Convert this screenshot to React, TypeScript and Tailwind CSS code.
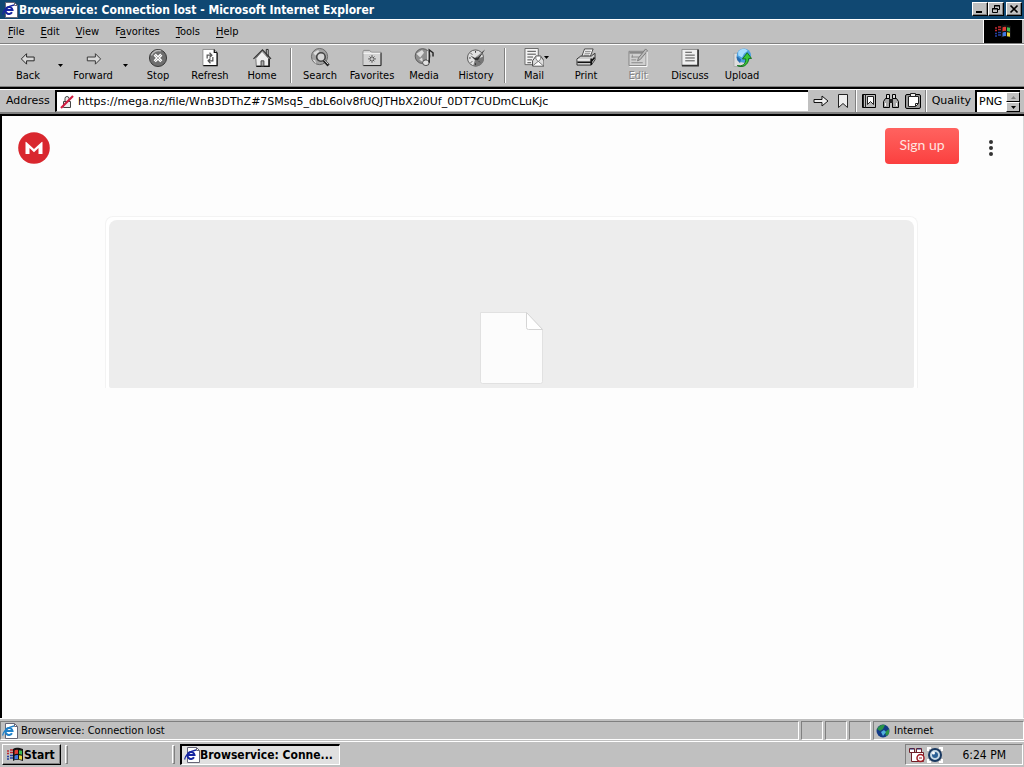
import React from "react";

const raised =
  "border border-t-white border-l-white border-r-black border-b-black bg-[#c0c0c0]";
const ui = "font-['DejaVu_Sans_Condensed','DejaVu_Sans',sans-serif]";

const icons: Record<string, React.ReactNode> = {
  Back: (
    <path d="M3 11.500 8.500 6v3.500h8v4h-8V17Z" fill="#d8d8d8" stroke="#222" />
  ),
  Forward: (
    <path d="M18 11.500 12.500 6v3.500H4v4h8.500V17Z" fill="#d8d8d8" stroke="#333" />
  ),
  Stop: (
    <>
      <circle cx="10" cy="10.500" r="9" fill="#6e6e6e" stroke="#333" />
      <path d="M3 8a8 8 0 0 1 10-5" stroke="#bbb" fill="none" strokeWidth="1.500" />
      <path d="m6.500 7 7 7m0-7-7 7" stroke="#fff" strokeWidth="3.200" />
      <path d="m7 7.500 6 6m0-6-6 6" stroke="#aaa" strokeWidth="1" />
    </>
  ),
  Refresh: (
    <>
      <path d="M2.500 1.500h12l3 3v14h-15Z" fill="#fff" stroke="#888" />
      <path d="M17.500 5v13.500H3M14.500 1.500v3h3" fill="none" stroke="#111" strokeWidth="1.300" />
      <path d="M7 11V7.500h5M9.500 5l2.500 2.500L9.500 10M13 9.500v4H8M10.500 11 8 13.500l2.500 2.500" fill="none" stroke="#555" strokeWidth="1.300" />
    </>
  ),
  Home: (
    <>
      <path d="M14.500 1.500h2v8h-2Z" fill="#ddd" stroke="#222" />
      <path d="M3.500 11 10 3.500l7 7.500v8h-13Z" fill="#eee" stroke="#777" />
      <path d="m1 11.500 9.500-9.500 9 9.500" fill="none" stroke="#333" strokeWidth="1.300" />
      <path d="M17.500 11v8.500H4" fill="none" stroke="#111" strokeWidth="1.500" />
      <path d="M9 13.500h3V19H9Z" fill="#aaa" stroke="#444" />
    </>
  ),
  Search: (
    <>
      <circle cx="9.500" cy="9" r="8.500" fill="#a3a3a3" stroke="#666" />
      <path d="M3 5 8 2l2 3-5 3ZM2 12l3 1 1 4" fill="#ddd" />
      <circle cx="11" cy="9.500" r="4.500" fill="#d6d6d6" stroke="#444" strokeWidth="1.700" />
      <path d="m14 13 5 5.500" stroke="#222" strokeWidth="3" />
      <path d="m14.500 12.500 4 4.500" stroke="#ddd" />
    </>
  ),
  Favorites: (
    <>
      <path d="M.5 18.500v-15l1-1h6l2 2h10v14Z" fill="#d4d4d4" stroke="#888" />
      <path d="M1 5.500h18" stroke="#fff" />
      <path d="M19.500 5v13.500H1" fill="none" stroke="#222" />
      <path d="M10 7.500v8M6 11.500h8M7.500 9l5 5m0-5-5 5" stroke="#444" />
      <circle cx="10" cy="11.500" r="1" fill="#fff" />
    </>
  ),
  Media: (
    <>
      <circle cx="8.500" cy="8.500" r="7.800" fill="#8f8f8f" stroke="#555" />
      <path d="m2 6 6-4 2 3-4 5ZM5 12l3-2 1 5Z" fill="#ddd" />
      <ellipse cx="12" cy="15.500" rx="3.500" ry="3" fill="#e2e2e2" stroke="#444" />
      <path d="M15.500 15.500V2l4 3v4" fill="none" stroke="#222" strokeWidth="1.500" />
      <path d="M14 3v10" stroke="#fff" />
    </>
  ),
  History: (
    <>
      <circle cx="9.500" cy="10.500" r="8.500" fill="#e2e2e2" stroke="#555" />
      <path d="M9 12 18 9a8.500 8.500 0 0 1-11 10Z" fill="#777" />
      <path d="M9.500 3v2M2.500 10.500h2M4.500 5.500 6 7M9.500 16v2M4.500 15.500 6 14M14 15l-1-1" stroke="#333" />
      <path d="m4 8 5 2.500 10.500-9L12 13l-3-.5Z" fill="#333" />
      <path d="m11 10 5-5" stroke="#ddd" />
    </>
  ),
  Mail: (
    <>
      <path d="M.5.5h14v17H.500Z" fill="#f4f4f4" stroke="#666" />
      <path d="M3 3.500h9M3 6.500h9M3 9.500h6M3 12.500h5M3 15.500h4" stroke="#444" />
      <path d="m8.500 13.500 3.500-5h5l3.500 5v5.500h-12Z" fill="#ddd" stroke="#444" />
      <path d="m9 18.500 5.500-4.500 5 4.500M12 8.500h5v3l-2.500 3-2.500-3Z" fill="#fff" stroke="#777" />
    </>
  ),
  Print: (
    <>
      <path d="m5.500 9 3-8h9l-3 8Z" fill="#fff" stroke="#444" />
      <path d="M9 3.500h6M8.500 5.500h6M7.500 7.500h6" stroke="#777" />
      <path d="m.5 11.500 4-3h11l4-3v7l-4 5.500H.500Z" fill="#ccc" stroke="#333" />
      <path d="M1 15h14l4-5M15.500 11v7" fill="none" stroke="#111" strokeWidth="1.800" />
      <path d="M1 12.500h13" stroke="#fff" />
    </>
  ),
  Edit: (
    <>
      <path d="M.5 3.500h18v15H.500Z" fill="#d0d0d0" stroke="#858585" />
      <path d="M1 5h17" stroke="#888" strokeWidth="2" />
      <path d="M3 9.500h8M3 12.500h5M3 15.500h12M4 7v3" stroke="#888" />
      <path d="m9.500 13.500 1-3L18 1l2 2-7.500 9Z" fill="#bbb" stroke="#777" />
      <path d="M1 19.500h18.500V4" fill="none" stroke="#fff" />
    </>
  ),
  Discuss: (
    <>
      <path d="M1.500 1.500h17v17h-17Z" fill="#f0f0f0" stroke="#888" />
      <path d="M18.500 1.500v17h-17" fill="none" stroke="#333" strokeWidth="1.800" />
      <path d="M5 4.500h7M5 7.500h10M5 10.500h10M5 13.500h10" stroke="#444" />
    </>
  ),
  Upload: (
    <>
      <path d="M1.500 5.500h11v14h-11Z" fill="#ddd" stroke="#aaa" />
      <circle cx="12" cy="8" r="7.500" fill="#4a9fe0" />
      <path d="M6 4c3-4 8-4 10-1l-4 3-2 4-4-2Z" fill="#a5dcff" />
      <path d="M5 18.500c5 1 9-1 9-7h-3.500L15.500 5l4.500 6h-3c0 7-7 10.500-12 7.500Z" fill="#38c738" stroke="#13701d" />
      <path d="M4 9c2 0 3 2 5 3l-1 4-3-3Z" fill="#246bb0" />
    </>
  ),
};

function ToolIcon({ name }: { name: string }) {
  return (
    <svg viewBox="0 0 20 20" className="size-5" aria-hidden="true">
      {icons[name]}
    </svg>
  );
}

function Caret() {
  return (
    <svg viewBox="0 0 5 3" className="h-[3px] w-[5px]" aria-hidden="true">
      <path d="M0 0h5L2.500 3Z" fill="#000" />
    </svg>
  );
}

function Tool({ name, disabled, menu }: { name: string; disabled?: boolean; menu?: boolean }) {
  return (
    <button
      type="button"
      disabled={disabled}
      className="relative flex w-[52px] shrink-0 flex-col items-center gap-[2px] disabled:text-[#858585] disabled:[text-shadow:1px_1px_#fff]"
    >
      <ToolIcon name={name} />
      <span className="leading-[14px]">{name}</span>
      {menu && (
        <span className="absolute top-2 right-[11px]">
          <Caret />
        </span>
      )}
    </button>
  );
}

function MenuCaret({ label }: { label: string }) {
  return (
    <button type="button" aria-label={label} className="flex w-[13px] shrink-0 items-center justify-center">
      <Caret />
    </button>
  );
}

function Divider() {
  return <span className="mx-[2px] h-full w-[2px] shrink-0 border-l border-l-[#808080] bg-white" />;
}

function IePage({ tone, className }: { tone: string; className: string }) {
  return (
    <svg viewBox="0 0 16 16" className={className} aria-hidden="true">
      <path d="M3.500.5h9l3 3v12h-12Z" fill="#fff" stroke="#667" />
      <path d="M12.500.5v3h3" fill="none" stroke="#667" />
      <path d="M10 10.300A3.500 3.500 0 1 1 10.500 8H4" fill="none" stroke={tone} strokeWidth="2" />
      <path d="M1 12.500C0 10 5 4 12 3" fill="none" stroke={tone} strokeWidth="1.300" />
    </svg>
  );
}

function FlagMark({ className }: { className: string }) {
  return (
    <svg viewBox="0 0 18 16" className={className} aria-hidden="true">
      <path d="M7 2c3-2 6-1 10 0v12c-4-1-7-2-10 0Z" fill="#111" />
      <path d="M8.500 3.500c1-.7 2-.8 3.500-.6v4c-1.500-.2-2.500 0-3.500.6Z" fill="#e33c33" />
      <path d="M13 3.200l3 .5v4l-3-.6Z" fill="#3dbb50" />
      <path d="M8.500 8.700c1-.7 2-.8 3.500-.6v4c-1.500-.2-2.500 0-3.500.6Z" fill="#4078e0" />
      <path d="M13 8.300l3 .5v4l-3-.6Z" fill="#e8d33c" />
      <path d="M1 4h2m1-1h3M1 6.500h2m1-1h3" stroke="#c02a30" strokeWidth="1.500" />
      <path d="M1 9.500h2m1-1h3M1 12h2m1-1h3" stroke="#2440a0" strokeWidth="1.500" />
    </svg>
  );
}

function TitleBar() {
  const box = `${raised} flex h-[14px] w-4 items-center justify-center shadow-[inset_-1px_-1px_#808080]`;
  return (
    <header className="flex h-[19px] items-center bg-[#104872] px-[2px] text-white">
      <IePage tone="#1525a0" className="size-4 shrink-0" />
      <h1 className="ml-px flex-1 truncate text-[12px] leading-4 font-bold">
        Browservice: Connection lost - Microsoft Internet Explorer
      </h1>
      <div className="mb-[2px] flex">
        <button type="button" aria-label="Minimize" className={box}>
          <svg viewBox="0 0 10 10" className="size-[10px]"><path d="M1 8h6" stroke="#000" strokeWidth="2" /></svg>
        </button>
        <button type="button" aria-label="Restore" className={box}>
          <svg viewBox="0 0 10 10" className="size-[10px]">
            <path d="M3.500 4V1.500h5v4H7M3 2h6" fill="none" stroke="#000" />
            <path d="M1.500 4.500h5v4h-5ZM1 5h6" fill="none" stroke="#000" />
          </svg>
        </button>
        <button type="button" aria-label="Close" className={`${box} ml-[2px]`}>
          <svg viewBox="0 0 10 10" className="size-[10px]"><path d="m1.500 1.500 7 7m0-7-7 7" stroke="#000" strokeWidth="1.700" /></svg>
        </button>
      </div>
    </header>
  );
}

function MenuBar() {
  const items: [string, string, string][] = [
    ["", "F", "ile"],
    ["", "E", "dit"],
    ["", "V", "iew"],
    ["F", "a", "vorites"],
    ["", "T", "ools"],
    ["", "H", "elp"],
  ];
  return (
    <nav className="flex h-[25px] border-t border-b border-t-white border-b-[#808080]">
      <ul className="flex flex-1 items-center gap-4 pl-2">
        {items.map(([pre, key, post]) => (
          <li key={key}>
            <button type="button" className="leading-[14px]">
              {pre}
              <u className="underline-offset-2">{key}</u>
              {post}
            </button>
          </li>
        ))}
      </ul>
      <div className="mr-[2px] flex w-[39px] items-center justify-center border-l border-l-white bg-black">
        <FlagMark className="h-4 w-[18px]" />
      </div>
    </nav>
  );
}

function ToolBar() {
  return (
    <div className="flex h-[43px] overflow-hidden border-t border-b border-t-white border-b-[#808080] py-[3px] pl-[2px]">
      <Tool name="Back" />
      <MenuCaret label="Back history" />
      <Tool name="Forward" />
      <MenuCaret label="Forward history" />
      <Tool name="Stop" />
      <Tool name="Refresh" />
      <Tool name="Home" />
      <Divider />
      <Tool name="Search" />
      <Tool name="Favorites" />
      <Tool name="Media" />
      <Tool name="History" />
      <Divider />
      <Tool name="Mail" menu />
      <Tool name="Print" />
      <Tool name="Edit" disabled />
      <Tool name="Discuss" />
      <Tool name="Upload" />
    </div>
  );
}

function AddressBar() {
  const btn = "flex w-[22px] shrink-0 items-center justify-center";
  return (
    <div className="flex h-[29px] border-t-2 border-b-2 border-black bg-[#c0c0c0] font-['DejaVu_Sans',sans-serif] text-[11px]">
      <div className="flex flex-1 border-t border-b-2 border-t-white border-b-[#808080] pl-1">
        <label htmlFor="address" className="flex w-[51px] shrink-0 items-center pl-[2px]">
          Address
        </label>
        <div className="flex flex-1 items-center border-t-2 border-b border-l-2 border-t-black border-b-[#c0c0c0] border-l-black bg-white">
          <svg viewBox="0 0 14 14" className="ml-[3px] size-[14px] shrink-0" aria-hidden="true">
            <path d="M3.500 6.500h7v6h-7ZM5 6V3.500Q5 1.500 7 1.500T9 3.500V6" fill="#eee" stroke="#444" />
            <path d="M1 13 13 1" stroke="#d01c40" strokeWidth="2.200" />
          </svg>
          <input
            id="address"
            className="ml-1 w-full bg-transparent outline-none"
            defaultValue="https://mega.nz/file/WnB3DThZ#7SMsq5_dbL6olv8fUQJTHbX2i0Uf_0DT7CUDmCLuKjc"
          />
        </div>
        <button type="button" aria-label="Go" className={`${btn} ml-[2px]`}>
          <svg viewBox="0 0 16 14" className="h-[14px] w-4"><path d="M1 5.500h8V2l6 5-6 5V8.500H1Z" fill="#eee" stroke="#111" /></svg>
        </button>
        <button type="button" aria-label="Bookmark" className={btn}>
          <svg viewBox="0 0 12 16" className="h-4 w-3"><path d="M1.500 1.500h9v13L6 10.500l-4.500 4Z" fill="#eee" stroke="#222" /></svg>
        </button>
        <span className="mx-px w-[2px] border-l border-l-[#808080] bg-white" />
        <button type="button" aria-label="Bookmarks" className={btn}>
          <svg viewBox="0 0 16 16" className="size-4">
            <path d="M1.500 1.500h13v13h-13Z" fill="#bbb" stroke="#000" />
            <path d="M4.500 1.500v13M2.500 2v12" stroke="#222" />
            <path d="M6.500 3.500h6v8l-3-3-3 3Z" fill="#fff" stroke="#222" />
          </svg>
        </button>
        <button type="button" aria-label="Find" className={btn}>
          <svg viewBox="0 0 16 16" className="size-4">
            <path d="M3.500 5.500v-4h3v4m3 0v-4h3v4" fill="#ddd" stroke="#000" />
            <path d="M.5 14.500v-6l2-3h4v9Zm15 0v-6l-2-3h-4v9Z" fill="#aaa" stroke="#000" />
            <path d="M6 6h4v4H6Z" fill="#222" />
            <path d="M2.500 10v3M13.500 10v3" stroke="#fff" />
          </svg>
        </button>
        <button type="button" aria-label="Clipboard" className={btn}>
          <svg viewBox="0 0 16 16" className="size-4">
            <rect x=".5" y="1.500" width="15" height="14" rx="1.500" fill="#999" stroke="#000" />
            <path d="M3.500 3.500h10v7l-3 3h-7Z" fill="#fff" stroke="#222" />
            <path d="M13.500 10.500h-3v3" fill="none" stroke="#222" />
            <path d="M5.500.5h5v3h-5Z" fill="#eee" stroke="#222" />
          </svg>
        </button>
        <span className="mx-px w-[2px] border-l border-l-[#808080] bg-white" />
        <label htmlFor="quality" className="flex items-center px-1">
          Quality
        </label>
        <div className="mr-1 flex border-t-2 border-l-2 border-black bg-white">
          <select id="quality" defaultValue="PNG" className="w-[29px] appearance-none bg-white pl-[2px] outline-none">
            <option>PNG</option>
            <option>JPEG</option>
          </select>
          <div className="flex w-[14px] flex-col">
            <button type="button" aria-label="Previous quality" className={`${raised} flex flex-1 items-center justify-center`}>
              <svg viewBox="0 0 5 3" className="h-[3px] w-[5px]"><path d="M0 3h5L2.500 0Z" fill="#808080" /></svg>
            </button>
            <button type="button" aria-label="Next quality" className={`${raised} flex flex-1 items-center justify-center`}>
              <Caret />
            </button>
          </div>
        </div>
      </div>
    </div>
  );
}

function Page() {
  return (
    <main className="flex flex-1 flex-col border-r border-l-2 border-r-[#d8d8d8] border-l-black bg-[#fdfdfd] font-[Lato,sans-serif]">
      <div className="flex items-start justify-between px-4 pt-3">
        <a href="#home" aria-label="MEGA" className="mt-1">
          <svg viewBox="0 0 32 32" className="size-8">
            <circle cx="16" cy="16" r="15.800" fill="#d9272e" />
            <path d="M7.500 22V10.200q0-.8.8-.2L16 17l7.700-7q.8-.6.8.2V22h-4v-6L16 20.200 11.500 16v6Z" fill="#fff" />
          </svg>
        </a>
        <div className="flex">
          <button
            type="button"
            className="h-9 w-[74px] rounded-[4px] bg-linear-to-b from-[#ff625f] to-[#fb3f3f] pb-[2px] text-[14px] text-[#ffe5e0]"
          >
            Sign up
          </button>
          <button type="button" aria-label="Menu" className="mt-1 ml-4 flex size-8 items-center justify-center">
            <svg viewBox="0 0 4 16" className="h-4 w-1">
              <g fill="#333">
                <circle cx="2" cy="2" r="2" />
                <circle cx="2" cy="8" r="2" />
                <circle cx="2" cy="14" r="2" />
              </g>
            </svg>
          </button>
        </div>
      </div>
      <section className="mr-[105px] ml-[103px] mt-[52px] rounded-t-lg border border-b-0 border-[#f3f3f3] bg-white px-[3px] pt-[3px]">
        <div className="flex h-[168px] items-end justify-center rounded-t-lg rounded-b-[2px] bg-[#ededed] pb-1">
          <svg viewBox="0 0 64 72" className="h-[72px] w-16" aria-hidden="true">
            <path d="M.5.5h46l16 17v52q0 2-2 2h-58q-2 0-2-2Z" fill="#fcfcfc" stroke="#e1e1e1" />
            <path d="M46.500.5v15q0 2 2 2h14Z" fill="#fff" stroke="#d5d5d5" />
          </svg>
        </div>
      </section>
    </main>
  );
}

function StatusBar() {
  const pane = "border border-t-[#808080] border-l-[#808080] border-r-white border-b-white";
  return (
    <footer className="flex h-[23px] gap-[2px] border-t border-t-white pt-[2px] pb-px">
      <div className={`${pane} flex flex-1 items-center`}>
        <IePage tone="#2080c8" className="ml-px size-4" />
        <span className="ml-[3px]">Browservice: Connection lost</span>
      </div>
      <div className={`${pane} w-[22px]`} />
      <div className={`${pane} w-[22px]`} />
      <div className={`${pane} w-[22px]`} />
      <div className={`${pane} flex w-[151px] items-center`}>
        <svg viewBox="0 0 14 14" className="ml-[2px] size-[14px]" aria-hidden="true">
          <circle cx="7" cy="7" r="6.500" fill="#123b87" />
          <path d="M1 5c2-4 6-5 8-4L7 5 4 7ZM9 8l4-3v5l-3 2Z" fill="#2c9448" />
          <path d="m5 8 3-2 2 2-3 4Z" fill="#51aee0" />
        </svg>
        <span className="ml-1">Internet</span>
      </div>
    </footer>
  );
}

function Grip() {
  return <span className="my-px w-[3px] border border-t-white border-l-white border-r-[#808080] border-b-[#808080]" />;
}

function TaskBar() {
  return (
    <div className="flex h-[26px] border-t border-t-white py-[2px] pr-px pl-[2px]">
      <button type="button" className={`${raised} flex w-[59px] items-center pl-[3px] text-[12px] font-bold shadow-[inset_-1px_-1px_#808080]`}>
        <FlagMark className="h-4 w-[18px] shrink-0" />
        Start
      </button>
      <div className="ml-1 flex w-[110px] justify-between">
        <Grip />
        <Grip />
      </div>
      <button
        type="button"
        className="ml-[5px] flex w-[160px] items-center border border-t-2 border-l-2 border-t-black border-r-white border-b-white border-l-black bg-[#e0e0e0] pl-[2px] text-[12px] font-bold"
      >
        <IePage tone="#1525a0" className="size-4 shrink-0" />
        <span className="whitespace-nowrap">Browservice: Conne...</span>
      </button>
      <div className="ml-auto flex w-[118px] items-center border border-t-[#808080] border-r-white border-b-white border-l-[#808080] pl-[3px]">
        <svg viewBox="0 0 16 16" className="size-4" aria-hidden="true">
          <path d="M.5 1.500h5v4h-5Zm7 0h5v4h-5ZM2.500 5.500h12v9h-12Z" fill="#fff" stroke="#702028" />
          <path d="M1 2h4m3 0h4" stroke="#202870" />
          <circle cx="11.500" cy="11" r="3.500" fill="#fff" stroke="#a01c24" strokeWidth="1.500" />
          <path d="M10 11h3" stroke="#a01c24" />
        </svg>
        <svg viewBox="0 0 16 16" className="ml-[2px] size-4" aria-hidden="true">
          <path d="M1 4V1h3M12 1h3v3M1 12v3h3M12 15h3v-3" fill="none" stroke="#fff" strokeWidth="2" />
          <circle cx="8" cy="8" r="6" fill="#c5d8e5" stroke="#183860" strokeWidth="2" />
          <circle cx="8" cy="8" r="3" fill="#2a6096" />
          <circle cx="6.500" cy="6" r="1.500" fill="#fff" />
        </svg>
        <time className="mr-4 ml-auto text-[12px]">6:24 PM</time>
      </div>
    </div>
  );
}

export default function App() {
  return (
    <div className={`flex min-h-screen flex-col bg-[#c0c0c0] text-[11px] leading-[14px] text-black ${ui}`}>
      <TitleBar />
      <MenuBar />
      <ToolBar />
      <AddressBar />
      <Page />
      <StatusBar />
      <TaskBar />
    </div>
  );
}
